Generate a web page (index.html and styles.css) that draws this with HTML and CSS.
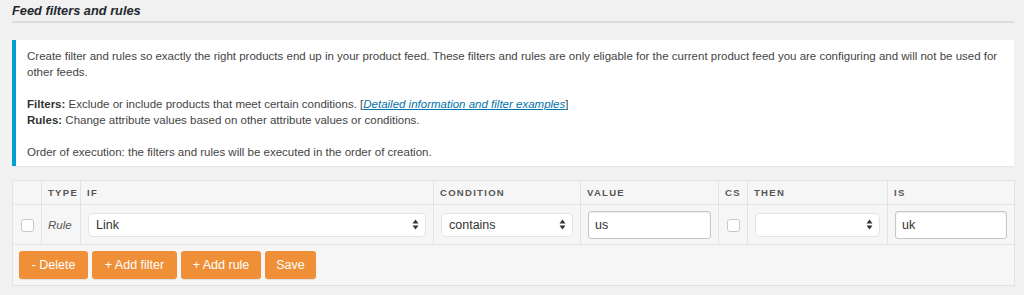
FILE: index.html
```html
<!DOCTYPE html>
<html>
<head>
<meta charset="utf-8">
<link rel="stylesheet" href="styles.css">
</head>
<body>
<div class="wrap">
  <h2 class="title">Feed filters and rules</h2>
  <div class="notice">
    <p>Create filter and rules so exactly the right products end up in your product feed. These filters and rules are only eligable for the current product feed you are configuring and will not be used for other feeds.</p>
    <p><strong>Filters:</strong> Exclude or include products that meet certain conditions. [<a href="#"><em>Detailed information and filter examples</em></a>]<br><strong>Rules:</strong> Change attribute values based on other attribute values or conditions.</p>
    <p>Order of execution: the filters and rules will be executed in the order of creation.</p>
  </div>
  <table class="rules">
    <colgroup>
      <col class="c-check"><col class="c-type"><col class="c-if"><col class="c-cond"><col class="c-val"><col class="c-cs"><col class="c-then"><col class="c-is">
    </colgroup>
    <thead>
      <tr><th></th><th>Type</th><th>If</th><th>Condition</th><th>Value</th><th>CS</th><th>Then</th><th>Is</th></tr>
    </thead>
    <tbody>
      <tr>
        <td class="center"><span class="cb"></span></td>
        <td class="type"><em>Rule</em></td>
        <td><div class="select"><span>Link</span><svg class="arr" width="7" height="11" viewBox="0 0 7 11"><path d="M3.5 0.5 L6.5 4.5 H0.5 Z M3.5 10.5 L6.5 6.5 H0.5 Z" fill="#333"/></svg></div></td>
        <td><div class="select"><span>contains</span><svg class="arr" width="7" height="11" viewBox="0 0 7 11"><path d="M3.5 0.5 L6.5 4.5 H0.5 Z M3.5 10.5 L6.5 6.5 H0.5 Z" fill="#333"/></svg></div></td>
        <td><div class="input">us</div></td>
        <td class="center"><span class="cb"></span></td>
        <td><div class="select"><span></span><svg class="arr" width="7" height="11" viewBox="0 0 7 11"><path d="M3.5 0.5 L6.5 4.5 H0.5 Z M3.5 10.5 L6.5 6.5 H0.5 Z" fill="#333"/></svg></div></td>
        <td><div class="input">uk</div></td>
      </tr>
    </tbody>
    <tfoot>
      <tr><td colspan="8">
        <div class="buttons">
          <button class="btn btn-del">- Delete</button>
          <button class="btn btn-filter">+ Add filter</button>
          <button class="btn btn-rule">+ Add rule</button>
          <button class="btn btn-save">Save</button>
        </div>
      </td></tr>
    </tfoot>
  </table>
</div>
</body>
</html>
```
FILE: styles.css
```css
html, body {
  margin: 0;
  padding: 0;
  background: #f1f1f1;
}
body {
  font-family: "Liberation Sans", Arial, sans-serif;
  font-size: 13px;
  color: #444;
  width: 1024px;
  height: 295px;
  overflow: hidden;
}
.wrap {
  padding: 0 10px 0 12px;
}
.title {
  margin: 0;
  padding: 4px 0 3px;
  font-size: 12.8px;
  font-weight: bold;
  font-style: italic;
  line-height: 14px;
  color: #23282d;
  border-bottom: 2px solid #dcdcdc;
}
.notice {
  margin-top: 17px;
  background: #fff;
  border-left: 4px solid #00a0d2;
  padding: 8px 8px 6px 11px;
  line-height: 16px;
  font-size: 11.5px;
  box-shadow: 0 1px 1px rgba(0,0,0,0.04);
}
.notice p {
  margin: 0 0 16px;
}
.notice p:last-child {
  margin-bottom: 0;
}
.notice strong {
  color: #333;
}
.notice a {
  color: #0073aa;
  text-decoration: underline;
}
.rules {
  margin-top: 14px;
  width: 1002px;
  border-collapse: collapse;
  background: #f6f6f6;
  border: 1px solid #e3e3e3;
  table-layout: fixed;
}
.c-check { width: 29px; }
.c-type { width: 39px; }
.c-if { width: 353px; }
.c-cond { width: 147px; }
.c-val { width: 138px; }
.c-cs { width: 29px; }
.c-then { width: 140px; }
.c-is { width: 127px; }
.rules th {
  height: 23px;
  padding: 0 6px;
  text-align: left;
  font-size: 9.5px;
  font-weight: bold;
  letter-spacing: 1.3px;
  text-transform: uppercase;
  color: #555;
  border-right: 1px solid #e3e3e3;
  border-bottom: 1px solid #e3e3e3;
}
.rules tbody td {
  height: 39px;
  padding: 0 7px;
  border-right: 1px solid #e3e3e3;
  border-bottom: 1px solid #e3e3e3;
}
.rules td.center {
  padding: 0;
  text-align: center;
}
.rules td.type {
  padding: 0 6px;
  color: #555;
  font-size: 11.5px;
}
.cb {
  display: inline-block;
  width: 11px;
  height: 11px;
  background: #fff;
  border: 1px solid #c9c9c9;
  border-radius: 3px;
  vertical-align: middle;
}
.select {
  display: flex;
  align-items: center;
  justify-content: space-between;
  height: 22px;
  padding: 0 6px 0 7px;
  background: #fff;
  border: 1px solid #e4e4e4;
  border-radius: 5px;
  color: #333;
  font-size: 12.5px;
}
.input {
  display: flex;
  align-items: center;
  height: 26px;
  padding: 0 6px;
  background: #fff;
  border: 1px solid #c6c6c6;
  border-radius: 3px;
  box-shadow: inset 0 1px 2px rgba(0,0,0,0.07);
  color: #333;
  font-size: 12.5px;
}
.rules tfoot td {
  height: 40px;
  padding: 0 6px;
}
.buttons {
  display: flex;
  gap: 4px;
}
.btn {
  height: 28px;
  padding: 0 0;
  border: 0;
  border-radius: 3px;
  background: #ef8f37;
  color: #fff;
  font-family: "Liberation Sans", Arial, sans-serif;
  font-size: 12.5px;
  box-shadow: 0 1px 0 rgba(0,0,0,0.08);
}
.btn-del { width: 69px; }
.btn-filter { width: 85px; }
.btn-rule { width: 80px; }
.btn-save { width: 51px; }
```
